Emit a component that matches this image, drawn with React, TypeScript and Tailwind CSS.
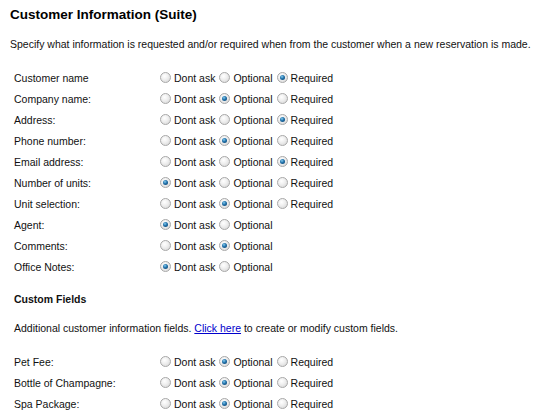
import React from "react";

type Choice = 0 | 1 | 2;

function Radio({ checked }: { checked: boolean }) {
  return (
    <span className="inline-flex w-[11px] h-[11px] rounded-full border border-[#a8a8a8] bg-[radial-gradient(circle_at_40%_35%,#ffffff_0%,#f0f0f0_40%,#d2d2d2_100%)] items-center justify-center shrink-0">
      {checked ? (
        <span className="block w-[5px] h-[5px] rounded-full bg-[radial-gradient(circle_at_40%_35%,#86cdf0_0%,#1f6fa8_45%,#0c3d66_100%)]" />
      ) : null}
    </span>
  );
}

function Options({ value, three }: { value: Choice; three: boolean }) {
  const labels = three ? ["Dont ask", "Optional", "Required"] : ["Dont ask", "Optional"];
  return (
    <div className="flex items-center">
      {labels.map((l, i) => (
        <span key={l} className="flex items-center mr-[4px]">
          <Radio checked={value === i} />
          <span className="ml-[3px]">{l}</span>
        </span>
      ))}
    </div>
  );
}

function Row({ label, value, three = true }: { label: string; value: Choice; three?: boolean }) {
  return (
    <div className="flex items-center h-[21px]">
      <div className="w-[146px] shrink-0">{label}</div>
      <Options value={value} three={three} />
    </div>
  );
}

const rows: { label: string; value: Choice; three?: boolean }[] = [
  { label: "Customer name", value: 2 },
  { label: "Company name:", value: 1 },
  { label: "Address:", value: 2 },
  { label: "Phone number:", value: 1 },
  { label: "Email address:", value: 2 },
  { label: "Number of units:", value: 0 },
  { label: "Unit selection:", value: 1 },
  { label: "Agent:", value: 0, three: false },
  { label: "Comments:", value: 1, three: false },
  { label: "Office Notes:", value: 0, three: false },
];

const custom: { label: string; value: Choice }[] = [
  { label: "Pet Fee:", value: 1 },
  { label: "Bottle of Champagne:", value: 1 },
  { label: "Spa Package:", value: 1 },
];

export default function App() {
  return (
    <div className="w-[536px] h-[418px] bg-white text-[#111] overflow-hidden font-['Liberation_Sans',Arial,sans-serif] text-[10.5px] leading-[14px]">
      <div className="pl-[10px] pt-[7px]">
        <div className="text-[13.5px] leading-[16px] font-bold text-black">Customer Information (Suite)</div>
        <div className="mt-[14px] whitespace-nowrap">
          Specify what information is requested and/or required when from the customer when a new reservation is made.
        </div>
      </div>
      <div className="pl-[14px] mt-[16px]">
        {rows.map((r) => (
          <Row key={r.label} label={r.label} value={r.value} three={r.three !== false} />
        ))}
      </div>
      <div className="pl-[14px] mt-[15px]">
        <div className="font-bold">Custom Fields</div>
        <div className="mt-[15px]">
          Additional customer information fields.{" "}
          <a href="#" className="text-[#0000cc] underline">
            Click here
          </a>{" "}
          to create or modify custom fields.
        </div>
      </div>
      <div className="pl-[14px] mt-[16px]">
        {custom.map((r) => (
          <Row key={r.label} label={r.label} value={r.value} />
        ))}
      </div>
    </div>
  );
}
